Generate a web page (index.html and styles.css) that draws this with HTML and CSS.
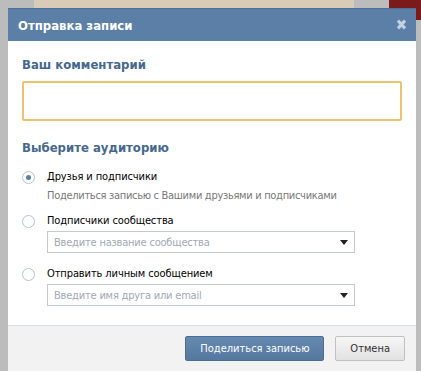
FILE: index.html
```html
<!DOCTYPE html>
<html lang="ru">
<head>
    <meta charset="UTF-8">
    <title>Отправка записи</title>
    <link rel="stylesheet" href="styles.css">
</head>
<body>
    <div class="backdrop">
        <div class="bg-poster"></div>
        <div class="bg-photo"></div>
    </div>
    <div class="box">
        <div class="box-title">
            <span>Отправка записи</span>
            <span class="box-close">&#10006;</span>
        </div>
        <div class="box-body">
            <div class="label">Ваш комментарий</div>
            <textarea class="comment"></textarea>
            <div class="label audience">Выберите аудиторию</div>
            <div class="option">
                <span class="radio on"></span>
                <span>Друзья и подписчики</span>
            </div>
            <div class="hint">Поделиться записью с Вашими друзьями и подписчиками</div>
            <div class="option">
                <span class="radio"></span>
                <span>Подписчики сообщества</span>
            </div>
            <div class="select">
                <span>Введите название сообщества</span>
                <span class="arrow"></span>
            </div>
            <div class="option">
                <span class="radio"></span>
                <span>Отправить личным сообщением</span>
            </div>
            <div class="select">
                <span>Введите имя друга или email</span>
                <span class="arrow"></span>
            </div>
        </div>
        <div class="box-footer">
            <button class="btn primary">Поделиться записью</button>
            <button class="btn">Отмена</button>
        </div>
    </div>
</body>
</html>
```

FILE: styles.css
```css
body {
    margin: 0;
    padding: 8px 0 0 8px;
    background-color: #bcbcbc;
    font-family: "DejaVu Sans Condensed", "DejaVu Sans", sans-serif;
    font-size: 11px;
    color: #000;
    overflow: hidden;
}
.backdrop {
    position: absolute;
    top: 0;
    left: 0;
    right: 0;
    height: 371px;
    z-index: 0;
}
.bg-poster {
    position: absolute;
    left: 34px;
    top: 0;
    width: 320px;
    height: 20px;
    background-color: #d8cbb8;
}
.bg-photo {
    position: absolute;
    left: 389px;
    top: 0;
    width: 32px;
    height: 20px;
    background-color: #7a1a1a;
}
.box {
    position: relative;
    z-index: 1;
    width: 408px;
    height: 363px;
    background-color: #fff;
    display: flex;
    flex-direction: column;
}
.box-title {
    height: 32px;
    border-top: 1px solid #4a6f98;
    background-color: #5b7fa6;
    color: #fff;
    font-weight: bold;
    font-size: 13px;
    display: flex;
    align-items: center;
    justify-content: space-between;
    padding: 0 9px 0 10px;
}
.box-close {
    color: #c4d2e2;
    font-size: 15px;
    font-weight: bold;
}
.box-body {
    flex: 1;
    padding: 16px 14px 0 14px;
}
.label {
    color: #45688e;
    font-weight: bold;
    font-size: 13px;
    line-height: 16px;
}
.comment {
    display: block;
    box-sizing: border-box;
    width: 380px;
    height: 40px;
    margin: 8px 0 0 0;
    border: 2px solid #ebc26e;
    border-radius: 2px;
    resize: none;
    outline: none;
}
.audience {
    margin-top: 19px;
    margin-bottom: 13px;
}
.option {
    display: flex;
    align-items: center;
    gap: 12px;
    line-height: 16px;
    height: 16px;
    margin-top: 4px;
    letter-spacing: -0.1px;
}
.radio {
    box-sizing: border-box;
    width: 13px;
    height: 13px;
    border: 1px solid #b7c1cc;
    border-radius: 50%;
    background-color: #fff;
    display: flex;
    align-items: center;
    justify-content: center;
}
.radio.on::after {
    content: "";
    width: 5px;
    height: 5px;
    border-radius: 50%;
    background-color: #5b7fa6;
}
.hint {
    color: #777;
    line-height: 16px;
    letter-spacing: -0.3px;
    margin: 3px 0 9px 25px;
}
.select {
    box-sizing: border-box;
    width: 308px;
    height: 22px;
    margin: 2px 0 13px 25px;
    border: 1px solid #c3cad2;
    color: #a0a8b2;
    letter-spacing: -0.2px;
    display: flex;
    align-items: center;
    justify-content: space-between;
    padding: 0 6px;
}
.arrow {
    width: 0;
    height: 0;
    border-left: 4px solid transparent;
    border-right: 4px solid transparent;
    border-top: 5px solid #222;
}
.box-footer {
    box-sizing: border-box;
    height: 46px;
    border-top: 1px solid #d8dfe6;
    background-color: #f2f2f2;
    display: flex;
    justify-content: flex-end;
    align-items: flex-start;
    gap: 11px;
    padding: 10px 11px 0 0;
}
.btn {
    font-family: inherit;
    font-size: 11px;
    white-space: nowrap;
    height: 25px;
    padding: 0 14px;
    border: 1px solid #c0c0c0;
    border-radius: 2px;
    background: linear-gradient(#f6f6f6, #e2e2e2);
    color: #333;
    cursor: pointer;
}
.btn.primary {
    width: 139px;
    border-color: #4a6d94;
    background: linear-gradient(#6689b0, #5578a0);
    color: #fff;
}
```
